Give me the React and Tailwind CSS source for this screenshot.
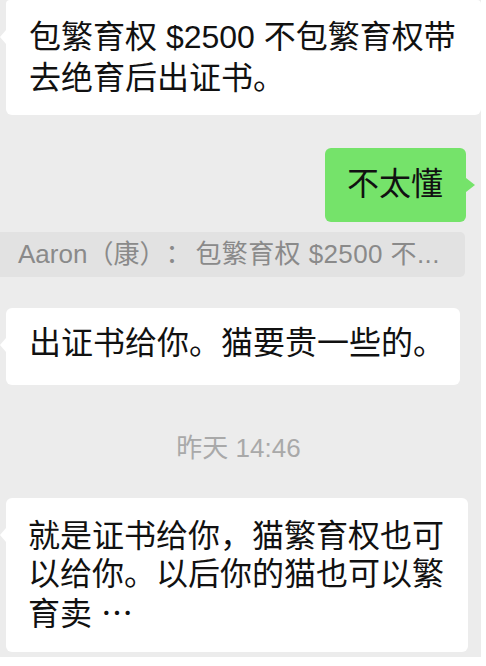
import React from "react";

const font = { fontFamily: '"Liberation Sans", "Noto Sans CJK SC", sans-serif' };

function LeftTail({ top }) {
  return (
    <span
      className="absolute left-[-6px] w-0 h-0 border-y-[7px] border-y-transparent border-r-[6px] border-r-white"
      style={{ top }}
    />
  );
}

export default function App() {
  return (
    <div className="w-[486px] h-[666px] bg-white overflow-hidden" style={font}>
      <div className="w-[481px] h-[657px] bg-[#ececec] flex flex-col">
        {/* bubble 1 */}
        <div className="relative ml-[6px] w-[475px] h-[115px] bg-white rounded-b-[6px] rounded-t-[4px] pl-[23px] pt-[17px] text-[32px] leading-[41px] text-[#111] whitespace-nowrap">
          <LeftTail top={30} />
          包繁育权 $2500 不包繁育权带
          <br />
          去绝育后出证书。
        </div>

        {/* green bubble */}
        <div className="flex justify-end mt-[33px] pr-[15px]">
          <div className="relative w-[141px] h-[74px] bg-[#75e36a] rounded-[6px] pl-[22px] pt-[16px] text-[32px] leading-[41px] text-[#111] whitespace-nowrap">
            不太懂
            <span className="absolute right-[-9px] top-[30px] w-0 h-0 border-y-[7px] border-y-transparent border-l-[9px] border-l-[#75e36a]" />
          </div>
        </div>

        {/* quote */}
        <div className="mt-[10px] w-[465px] h-[45px] bg-[#e2e2e2] rounded-r-[5px] pl-[18px] flex items-center text-[26px] text-[#8a8a8a] whitespace-nowrap">
          <span>Aaron（康）</span>
          <span>：</span>
          <span className="ml-[4px] tracking-[0.4px]">包繁育权 $2500 不...</span>
        </div>

        {/* bubble 2 */}
        <div className="relative ml-[6px] mt-[31px] w-[454px] h-[77px] bg-white rounded-[6px] pl-[23px] pt-[15px] text-[32px] leading-[41px] text-[#111] whitespace-nowrap">
          <LeftTail top={30} />
          出证书给你。猫要贵一些的。
        </div>

        {/* timestamp */}
        <div className="mt-[48px] h-[30px] flex justify-center items-center pr-[4px] text-[26px] text-[#a9a9a9]">
          昨天 14:46
        </div>

        {/* bubble 3 */}
        <div className="relative ml-[6px] mt-[35px] w-[462px] h-[154px] bg-white rounded-[6px] pl-[22px] pt-[20px] text-[32px] leading-[37.5px] text-[#111] whitespace-nowrap">
          <LeftTail top={30} />
          就是证书给你，猫繁育权也可
          <br />
          以给你。以后你的猫也可以繁
          <br />
          育卖 <span style={{ fontFamily: '"Noto Sans CJK SC", sans-serif' }}>…</span>
        </div>
      </div>
    </div>
  );
}
